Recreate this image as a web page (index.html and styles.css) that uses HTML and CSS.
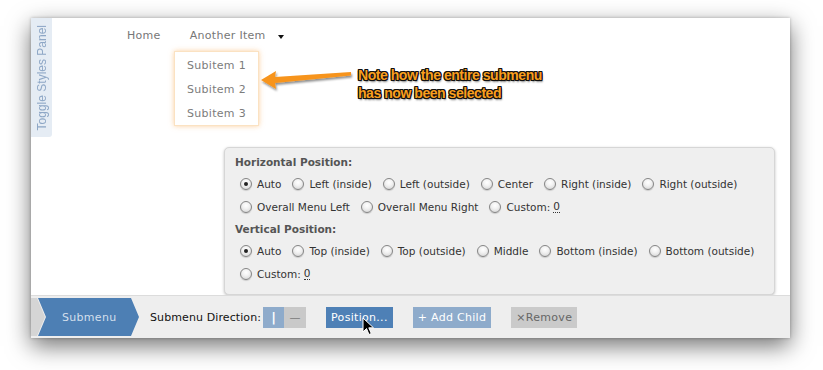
FILE: index.html
```html
<!DOCTYPE html>
<html>
<head>
<meta charset="utf-8">
<link rel="stylesheet" href="styles.css">
</head>
<body>
<div class="window">
  <div class="main">
    <div class="tab"><span class="tab-text">Toggle Styles Panel</span></div>
    <nav class="nav">
      <span class="nav-item">Home</span>
      <span class="nav-item">Another Item</span>
      <span class="caret"></span>
    </nav>

    <div class="dropdown">
      <div class="sub">Subitem 1</div>
      <div class="sub">Subitem 2</div>
      <div class="sub">Subitem 3</div>
    </div>

    <svg class="arrow" width="100" height="30" viewBox="0 0 100 30">
      <defs>
        <filter id="sh" x="-20%" y="-40%" width="140%" height="180%">
          <feDropShadow dx="1" dy="2" stdDeviation="1.2" flood-color="#000" flood-opacity="0.45"/>
        </filter>
      </defs>
      <path d="M2 13 L17 4 L16 10 L92 5 L92 8.5 L16 16 L17 22 Z" fill="#f7941d" filter="url(#sh)"/>
    </svg>
    <div class="note">Note how the entire submenu<br>has now been selected</div>

    <div class="panel">
      <div class="heading">Horizontal Position:</div>
      <div class="row">
        <label class="opt"><span class="radio on"></span>Auto</label>
        <label class="opt"><span class="radio"></span>Left (inside)</label>
        <label class="opt"><span class="radio"></span>Left (outside)</label>
        <label class="opt"><span class="radio"></span>Center</label>
        <label class="opt"><span class="radio"></span>Right (inside)</label>
        <label class="opt"><span class="radio"></span>Right (outside)</label>
      </div>
      <div class="row">
        <label class="opt"><span class="radio"></span>Overall Menu Left</label>
        <label class="opt"><span class="radio"></span>Overall Menu Right</label>
        <label class="opt"><span class="radio"></span>Custom: <span class="val">0</span></label>
      </div>
      <div class="heading">Vertical Position:</div>
      <div class="row">
        <label class="opt"><span class="radio on"></span>Auto</label>
        <label class="opt"><span class="radio"></span>Top (inside)</label>
        <label class="opt"><span class="radio"></span>Top (outside)</label>
        <label class="opt"><span class="radio"></span>Middle</label>
        <label class="opt"><span class="radio"></span>Bottom (inside)</label>
        <label class="opt"><span class="radio"></span>Bottom (outside)</label>
      </div>
      <div class="row">
        <label class="opt"><span class="radio"></span>Custom: <span class="val">0</span></label>
      </div>
      <span class="pointer"></span>
    </div>
  </div>

  <div class="footer">
    <div class="crumbs">
      <span class="crumb-prev"></span>
      <span class="crumb">Submenu</span>
    </div>
    <span class="dir-label">Submenu Direction:</span>
    <span class="toggle">
      <span class="tbtn tbtn-on">|</span><span class="tbtn tbtn-off">—</span>
    </span>
    <span class="btn btn-primary">Position...</span>
    <span class="btn btn-light">+ Add Child</span>
    <span class="btn btn-gray">×Remove</span>
    <svg class="cursor" width="12" height="19" viewBox="0 0 12 19">
      <path d="M1 1 L1 15 L4.5 11.5 L7 17.5 L9.3 16.5 L6.8 10.8 L11.5 10.8 Z" fill="#000" stroke="#fff" stroke-width="1" stroke-linejoin="round"/>
    </svg>
  </div>
</div>
</body>
</html>
```
FILE: styles.css
```css
* { box-sizing: border-box; }
html, body { margin: 0; padding: 0; background: #fff; }
body { width: 823px; height: 370px; overflow: hidden; font-family: "DejaVu Sans", Verdana, sans-serif; }

.window {
  margin: 18px 0 0 31px;
  width: 759px;
  height: 320px;
  background: #fff;
  display: flex;
  flex-direction: column;
  box-shadow: 0 8px 22px rgba(0,0,0,0.55), 0 0 3px rgba(0,0,0,0.25);
  position: relative;
}

.main {
  position: relative;
  height: 277px;
  display: flex;
  align-items: flex-start;
}

.tab {
  width: 21px;
  height: 119px;
  background: #e5ecf4;
  border-bottom-right-radius: 3px;
  display: flex;
  align-items: center;
  justify-content: center;
}
.tab-text {
  writing-mode: vertical-rl;
  transform: rotate(180deg);
  font-family: "Liberation Sans", Arial, sans-serif;
  font-size: 12px;
  color: #8ea7c6;
  white-space: nowrap;
}

.nav {
  display: flex;
  align-items: center;
  padding: 10px 0 0 75px;
  font-size: 11px;
  color: #777;
  letter-spacing: 0.3px;
}
.nav-item { margin-right: 29px; line-height: 16px; }
.nav-item:nth-child(2) { margin-right: 12px; }
.caret {
  width: 0; height: 0;
  border-left: 3px solid transparent;
  border-right: 3px solid transparent;
  border-top: 4px solid #111;
  margin-top: 1px;
}

.dropdown {
  position: absolute;
  left: 143px;
  top: 33px;
  width: 85px;
  height: 75px;
  background: #fff;
  border: 1px solid #fbe2c2;
  box-shadow: 0 0 5px rgba(250,170,80,0.55);
  padding: 2px 0 0 12px;
}
.sub {
  font-size: 11px;
  letter-spacing: 0.3px;
  color: #7c7c7c;
  line-height: 24px;
}

.arrow { position: absolute; left: 228px; top: 49px; }
.note {
  position: absolute;
  left: 327px;
  top: 48px;
  font-family: "Liberation Sans", Arial, sans-serif;
  font-weight: bold;
  font-size: 14px;
  line-height: 18px;
  letter-spacing: -0.45px;
  color: #f99f1e;
  text-shadow: -1px -1px 0 #111, 1px -1px 0 #111, -1px 1px 0 #111, 1px 1px 0 #111,
               0 -1px 0 #111, 0 1px 0 #111, -1px 0 0 #111, 1px 0 0 #111, 1px 2px 2px rgba(0,0,0,0.6);
}

.panel {
  position: absolute;
  left: 193px;
  top: 129px;
  width: 551px;
  height: 148px;
  background: #efefef;
  border: 1px solid #d6d6d6;
  border-radius: 5px;
  box-shadow: 0 1px 3px rgba(0,0,0,0.25);
  padding: 6px 0 0 10px;
  font-size: 10.5px;
  color: #333;
}
.heading {
  font-weight: bold;
  color: #555;
  line-height: 16px;
  margin-bottom: 2px;
}
.row {
  display: flex;
  align-items: center;
  gap: 11px;
  height: 23px;
  padding-left: 5px;
}
.row + .heading { margin-top: 3px; }
.opt { display: flex; align-items: center; gap: 5px; color: #333; white-space: nowrap; }
.radio {
  width: 12px; height: 12px;
  border-radius: 50%;
  border: 1px solid #858585;
  background: radial-gradient(circle at 50% 35%, #ffffff 0%, #f2f2f2 40%, #cfcfcf 100%);
  box-shadow: 0 1px 1px rgba(0,0,0,0.15);
  display: flex; align-items: center; justify-content: center;
}
.radio.on::after {
  content: "";
  width: 4px; height: 4px;
  border-radius: 50%;
  background: #222;
}
.val { border-bottom: 1px dotted #333; line-height: 12px; margin-left: -2px; }

.pointer {
  position: absolute;
  left: 125px;
  bottom: -10px;
  width: 0; height: 0;
  border-left: 8px solid transparent;
  border-right: 8px solid transparent;
  border-top: 9px solid #d0d0d0;
}

.footer {
  height: 43px;
  background: #eeeeee;
  border-top: 1px solid #dcdcdc;
  display: flex;
  align-items: center;
  position: relative;
  font-size: 11px;
}
.crumbs { display: flex; height: 38px; align-self: flex-start; margin-top: 2px; }
.crumb-prev {
  width: 14px; height: 38px;
  background: #d5d5d5;
  clip-path: polygon(0 0, 6px 0, 14px 50%, 6px 100%, 0 100%);
}
.crumb {
  width: 101px; height: 38px;
  margin-left: -7px;
  background: #4d7fb4;
  clip-path: polygon(0 0, 93px 0, 101px 50%, 93px 100%, 0 100%, 8px 50%);
  color: #d3dfec;
  display: flex; align-items: center;
  padding-left: 24px;
  letter-spacing: 0.3px;
}
.dir-label { margin-left: 11px; color: #111; letter-spacing: 0.1px; }
.toggle { display: flex; margin-left: 2px; }
.tbtn { height: 21px; display: flex; align-items: center; justify-content: center; }
.tbtn-on { width: 21px; background: #8eabcb; color: #fff; font-weight: bold; font-size: 13px; }
.tbtn-off { width: 22px; background: #c9c9c9; color: #7a7a7a; font-size: 11px; }
.btn { height: 21px; display: flex; align-items: center; padding: 0 5px; letter-spacing: 0.3px; }
.btn-primary { margin-left: 20px; background: #4e80b6; color: #fff; }
.btn-light { margin-left: 20px; background: #8eabcb; color: #fff; }
.btn-gray { margin-left: 20px; background: #cacaca; color: #666; }
.cursor { position: absolute; left: 331px; top: 21px; }
```
